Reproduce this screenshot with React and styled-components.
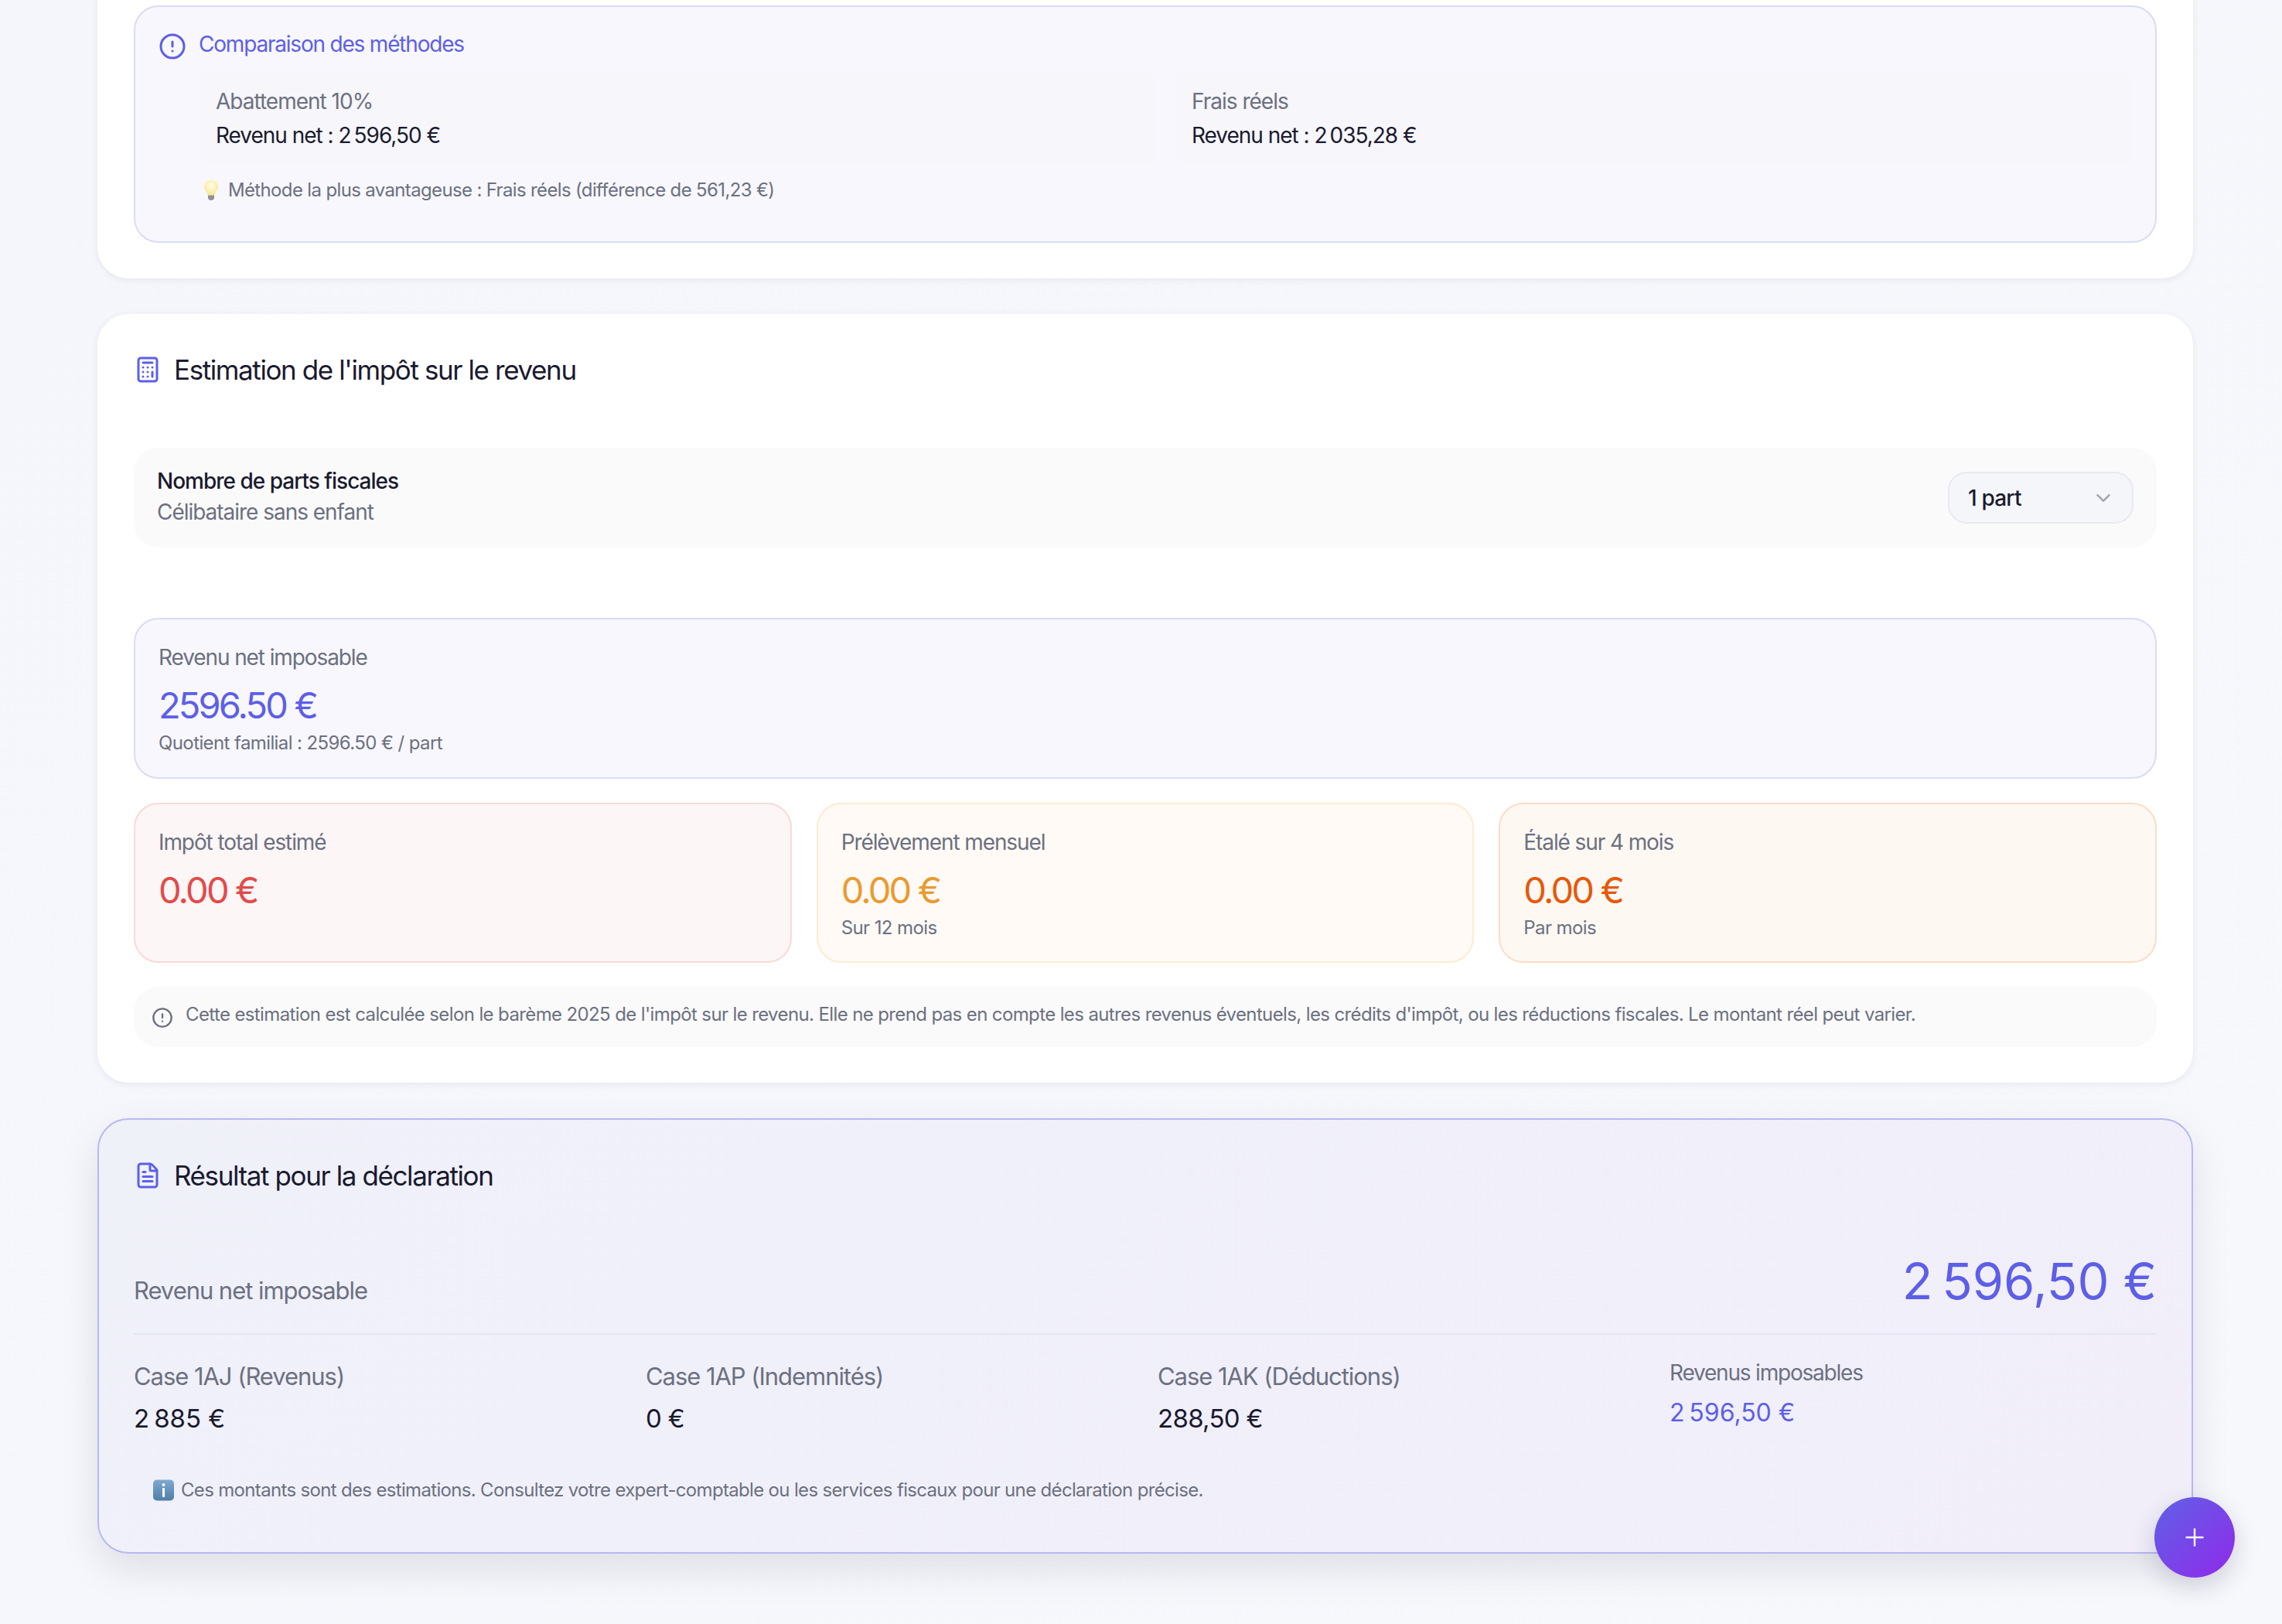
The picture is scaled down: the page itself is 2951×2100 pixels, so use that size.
import React from "react";
import styled, { createGlobalStyle } from "styled-components";
import { Calculator, ChevronDown, CircleAlert, FileText, Plus } from "lucide-react";

const indigo = "#5d5fe6";
const ink = "#1a1a2e";
const muted = "#6c7080";

const tones = {
  indigo: { bg: "#f7f7fd", line: "#dadbf8", fg: indigo },
  red: { bg: "#fcf6f6", line: "#fad9d9", fg: "#e24b4b" },
  amber: { bg: "#fffaf5", line: "#fdebd3", fg: "#e99b30" },
  orange: { bg: "#fef8f3", line: "#fcddc5", fg: "#e5590b" },
};

const Global = createGlobalStyle`
  html, body { margin: 0; padding: 0; }
  body {
    font-family: Inter, "Noto Sans", "Liberation Sans", sans-serif;
    color: ${ink};
    background: #f6f7fb;
    -webkit-font-smoothing: antialiased;
  }
  * { box-sizing: border-box; }
`;

const Page = styled.main`
  height: 2100px;
  overflow: hidden;
  display: flex;
  flex-direction: column;
  justify-content: flex-end;
  gap: 46px;
  padding: 0 115px 91px 126px;
  background: linear-gradient(135deg, #f5f6fb 0%, #f7f8fc 100%);
`;

const Card = styled.section`
  flex: none;
  background: #ffffff;
  border-radius: 40px;
  padding: 48px 47px 46px;
  box-shadow: 0 2px 10px rgba(20, 20, 50, 0.07);
`;

const ResultCard = styled.section`
  flex: none;
  border: 2px solid #b6b8f0;
  border-radius: 40px;
  padding: 48px 45px 63px;
  background: linear-gradient(135deg, #eff1f9 0%, #f1eefa 100%);
  box-shadow: 0 20px 50px rgba(20, 20, 50, 0.1);
`;

const Heading = styled.h2`
  display: flex;
  align-items: center;
  gap: 16px;
  margin: 0;
  font-size: 35px;
  line-height: 48px;
  font-weight: 400;
  letter-spacing: -1.4px;
  color: ${ink};
  svg { color: ${indigo}; flex: none; }
`;

const CompareBox = styled.div`
  border: 2px solid ${tones.indigo.line};
  border-radius: 32px;
  background: ${tones.indigo.bg};
  padding: 30px 30px 49px;
`;

const CompareTitle = styled.div`
  display: flex;
  gap: 16px;
  font-size: 28px;
  line-height: 36px;
  font-weight: 400;
  letter-spacing: -1.2px;
  color: ${indigo};
  svg { flex: none; margin-top: 3px; }
`;

const MethodGrid = styled.div`
  display: grid;
  grid-template-columns: 1fr 1fr;
  gap: 24px;
  margin: 14px 0 15px 52px;
`;

const Method = styled.div`
  background: #f6f6fb;
  border-radius: 16px;
  padding: 20px 22px 19px;
`;

const MethodName = styled.div`
  font-size: 28px;
  line-height: 38px;
  letter-spacing: -1px;
  color: ${muted};
`;

const MethodValue = styled.div`
  margin-top: 5px;
  font-size: 28px;
  line-height: 40px;
  font-weight: 400;
  letter-spacing: -1.02px;
  color: ${ink};
`;

const Tip = styled.div`
  display: flex;
  align-items: center;
  gap: 11px;
  margin-left: 52px;
  padding-left: 5px;
  font-size: 24px;
  line-height: 34px;
  letter-spacing: -0.65px;
  color: ${muted};
`;

const PartsRow = styled.div`
  display: flex;
  align-items: center;
  justify-content: space-between;
  height: 129px;
  margin-top: 77px;
  padding: 0 30px 0 30px;
  background: #fafafb;
  border-radius: 32px;
`;

const PartsText = styled.div`
  margin-top: -3px;
`;

const PartsName = styled.div`
  font-size: 28px;
  line-height: 40px;
  font-weight: 550;
  letter-spacing: -1px;
  color: ${ink};
`;

const PartsHint = styled.div`
  font-size: 28px;
  line-height: 40px;
  letter-spacing: -1.03px;
  color: ${muted};
`;

const Select = styled.div`
  display: flex;
  align-items: center;
  justify-content: space-between;
  width: 240px;
  height: 67px;
  padding: 0 22px 0 24px;
  background: #f5f6fa;
  border: 2px solid #e9eaee;
  border-radius: 24px;
  font-size: 28px;
  font-weight: 500;
  letter-spacing: -0.8px;
  color: ${ink};
  svg { color: #a6a9b2; }
`;

const Stats = styled.div`
  display: grid;
  grid-template-columns: repeat(3, 1fr);
  gap: 31px 32px;
  margin-top: 91px;
`;

const Stat = styled.div`
  grid-column: ${(p) => (p.$wide ? "1 / -1" : "auto")};
  height: ${(p) => (p.$wide ? "208px" : "207px")};
  padding: 30px;
  background: ${(p) => tones[p.$tone].bg};
  border: 2px solid ${(p) => tones[p.$tone].line};
  border-radius: 32px;
`;

const StatLabel = styled.div`
  font-size: 28px;
  line-height: 38px;
  letter-spacing: -1.1px;
  color: ${muted};
`;

const StatValue = styled.div`
  margin-top: 11px;
  font-size: 47px;
  line-height: 64px;
  font-weight: 420;
  letter-spacing: -2.85px;
  color: ${(p) => tones[p.$tone].fg};
`;

const StatHint = styled.div`
  font-size: 24px;
  line-height: 34px;
  letter-spacing: -0.6px;
  color: ${muted};
`;

const Notice = styled.div`
  display: flex;
  gap: 16px;
  height: 78px;
  margin-top: 31px;
  padding: 19px 24px 0 23px;
  background: #fafafb;
  border-radius: 32px;
  font-size: 24px;
  line-height: 34px;
  letter-spacing: -0.62px;
  color: ${muted};
  svg { flex: none; margin-top: 7px; }
`;

const TotalRow = styled.div`
  display: flex;
  align-items: baseline;
  justify-content: space-between;
  margin-top: 73px;
  padding-bottom: 27px;
  border-bottom: 2px solid #e5e5f2;
`;

const TotalLabel = styled.div`
  font-size: 31px;
  letter-spacing: -1.05px;
  color: ${muted};
`;

const TotalValue = styled.div`
  font-size: 65px;
  line-height: 80px;
  font-weight: 420;
  letter-spacing: -4px;
  color: ${indigo};
`;

const Boxes = styled.div`
  display: grid;
  grid-template-columns: repeat(4, 1fr);
  gap: 32px;
  margin-top: 34px;
`;

const BoxLabel = styled.div`
  font-size: ${(p) => (p.$small ? "28px" : "31px")};
  line-height: ${(p) => (p.$small ? "30px" : "40px")};
  letter-spacing: ${(p) => (p.$small ? "-1.2px" : "-1.05px")};
  color: ${muted};
`;

const BoxValue = styled.div`
  margin-top: ${(p) => (p.$accent ? "15px" : "12px")};
  font-size: ${(p) => (p.$accent ? "32px" : "33px")};
  line-height: 44px;
  font-weight: 400;
  letter-spacing: ${(p) => (p.$accent ? "-0.3px" : "-0.7px")};
  color: ${(p) => (p.$accent ? indigo : ink)};
`;

const Footnote = styled.div`
  display: flex;
  align-items: center;
  gap: 8px;
  margin-top: 54px;
  padding-left: 24px;
  font-size: 24px;
  line-height: 34px;
  letter-spacing: -0.67px;
  color: ${muted};
`;

const Fab = styled.button`
  position: fixed;
  right: 61px;
  bottom: 60px;
  width: 104px;
  height: 104px;
  display: grid;
  place-items: center;
  padding: 0;
  border: 0;
  border-radius: 50%;
  color: #ffffff;
  background: linear-gradient(135deg, #5f62e6 0%, #9029ea 100%);
  box-shadow: 0 12px 32px rgba(30, 30, 60, 0.18);
`;

const BulbEmoji = () => (
  <svg width="22" height="28" viewBox="0 0 22 28" aria-hidden="true">
    <defs>
      <radialGradient id="bulb" cx="50%" cy="35%" r="65%">
        <stop offset="0%" stopColor="#fffde6" />
        <stop offset="100%" stopColor="#f8e58e" />
      </radialGradient>
    </defs>
    <path d="M11 1C5.7 1 2 4.8 2 9.6c0 4.4 3.6 6.3 4.6 11h8.8c1-4.7 4.6-6.6 4.6-11C20 4.8 16.3 1 11 1z" fill="url(#bulb)" />
    <path d="M7 20.5h8v3.5c0 1-1.5 3-4 3s-4-2-4-3z" fill="#8f9096" />
  </svg>
);

const InfoEmoji = () => (
  <svg width="29" height="28" viewBox="0 0 29 28" aria-hidden="true">
    <defs>
      <linearGradient id="infoFill" x1="0" y1="0" x2="0" y2="1">
        <stop offset="0%" stopColor="#7fa8cf" />
        <stop offset="100%" stopColor="#4f7ea8" />
      </linearGradient>
    </defs>
    <rect x="1" y="0.5" width="27" height="27" rx="5" fill="url(#infoFill)" />
    <circle cx="14.5" cy="7" r="2" fill="#ffffff" />
    <rect x="13" y="11" width="3" height="12" fill="#ffffff" />
  </svg>
);

export default function App() {
  return (
    <>
      <Global />
      <Page>
        <Card>
          <CompareBox>
            <CompareTitle>
              <CircleAlert size={36} strokeWidth={2} />
              Comparaison des méthodes
            </CompareTitle>
            <MethodGrid>
              <Method>
                <MethodName>Abattement 10%</MethodName>
                <MethodValue>Revenu net : 2{"\u202f"}596,50 €</MethodValue>
              </Method>
              <Method>
                <MethodName>Frais réels</MethodName>
                <MethodValue>Revenu net : 2{"\u202f"}035,28 €</MethodValue>
              </Method>
            </MethodGrid>
            <Tip>
              <BulbEmoji />
              Méthode la plus avantageuse : Frais réels (différence de 561,23 €)
            </Tip>
          </CompareBox>
        </Card>

        <Card>
          <Heading>
            <Calculator size={36} strokeWidth={2} />
            Estimation de l'impôt sur le revenu
          </Heading>
          <PartsRow>
            <PartsText>
              <PartsName>Nombre de parts fiscales</PartsName>
              <PartsHint>Célibataire sans enfant</PartsHint>
            </PartsText>
            <Select>
              1 part
              <ChevronDown size={30} strokeWidth={2} />
            </Select>
          </PartsRow>
          <Stats>
            <Stat $wide $tone="indigo">
              <StatLabel>Revenu net imposable</StatLabel>
              <StatValue $tone="indigo">2596.50 €</StatValue>
              <StatHint>Quotient familial : 2596.50 € / part</StatHint>
            </Stat>
            <Stat $tone="red">
              <StatLabel>Impôt total estimé</StatLabel>
              <StatValue $tone="red">0.00 €</StatValue>
            </Stat>
            <Stat $tone="amber">
              <StatLabel>Prélèvement mensuel</StatLabel>
              <StatValue $tone="amber">0.00 €</StatValue>
              <StatHint>Sur 12 mois</StatHint>
            </Stat>
            <Stat $tone="orange">
              <StatLabel>Étalé sur 4 mois</StatLabel>
              <StatValue $tone="orange">0.00 €</StatValue>
              <StatHint>Par mois</StatHint>
            </Stat>
          </Stats>
          <Notice>
            <CircleAlert size={28} strokeWidth={2} />
            Cette estimation est calculée selon le barème 2025 de l'impôt sur le revenu. Elle ne prend pas en compte les autres revenus éventuels, les crédits d'impôt, ou les réductions fiscales. Le montant réel peut varier.
          </Notice>
        </Card>

        <ResultCard>
          <Heading>
            <FileText size={36} strokeWidth={2} />
            Résultat pour la déclaration
          </Heading>
          <TotalRow>
            <TotalLabel>Revenu net imposable</TotalLabel>
            <TotalValue>2{"\u202f"}596,50 €</TotalValue>
          </TotalRow>
          <Boxes>
            <div>
              <BoxLabel>Case 1AJ (Revenus)</BoxLabel>
              <BoxValue>2{"\u202f"}885 €</BoxValue>
            </div>
            <div>
              <BoxLabel>Case 1AP (Indemnités)</BoxLabel>
              <BoxValue>0 €</BoxValue>
            </div>
            <div>
              <BoxLabel>Case 1AK (Déductions)</BoxLabel>
              <BoxValue>288,50 €</BoxValue>
            </div>
            <div>
              <BoxLabel $small>Revenus imposables</BoxLabel>
              <BoxValue $accent>2{"\u202f"}596,50 €</BoxValue>
            </div>
          </Boxes>
          <Footnote>
            <InfoEmoji />
            Ces montants sont des estimations. Consultez votre expert-comptable ou les services fiscaux pour une déclaration précise.
          </Footnote>
        </ResultCard>
      </Page>
      <Fab aria-label="Ajouter">
        <Plus size={36} strokeWidth={1.6} />
      </Fab>
    </>
  );
}
